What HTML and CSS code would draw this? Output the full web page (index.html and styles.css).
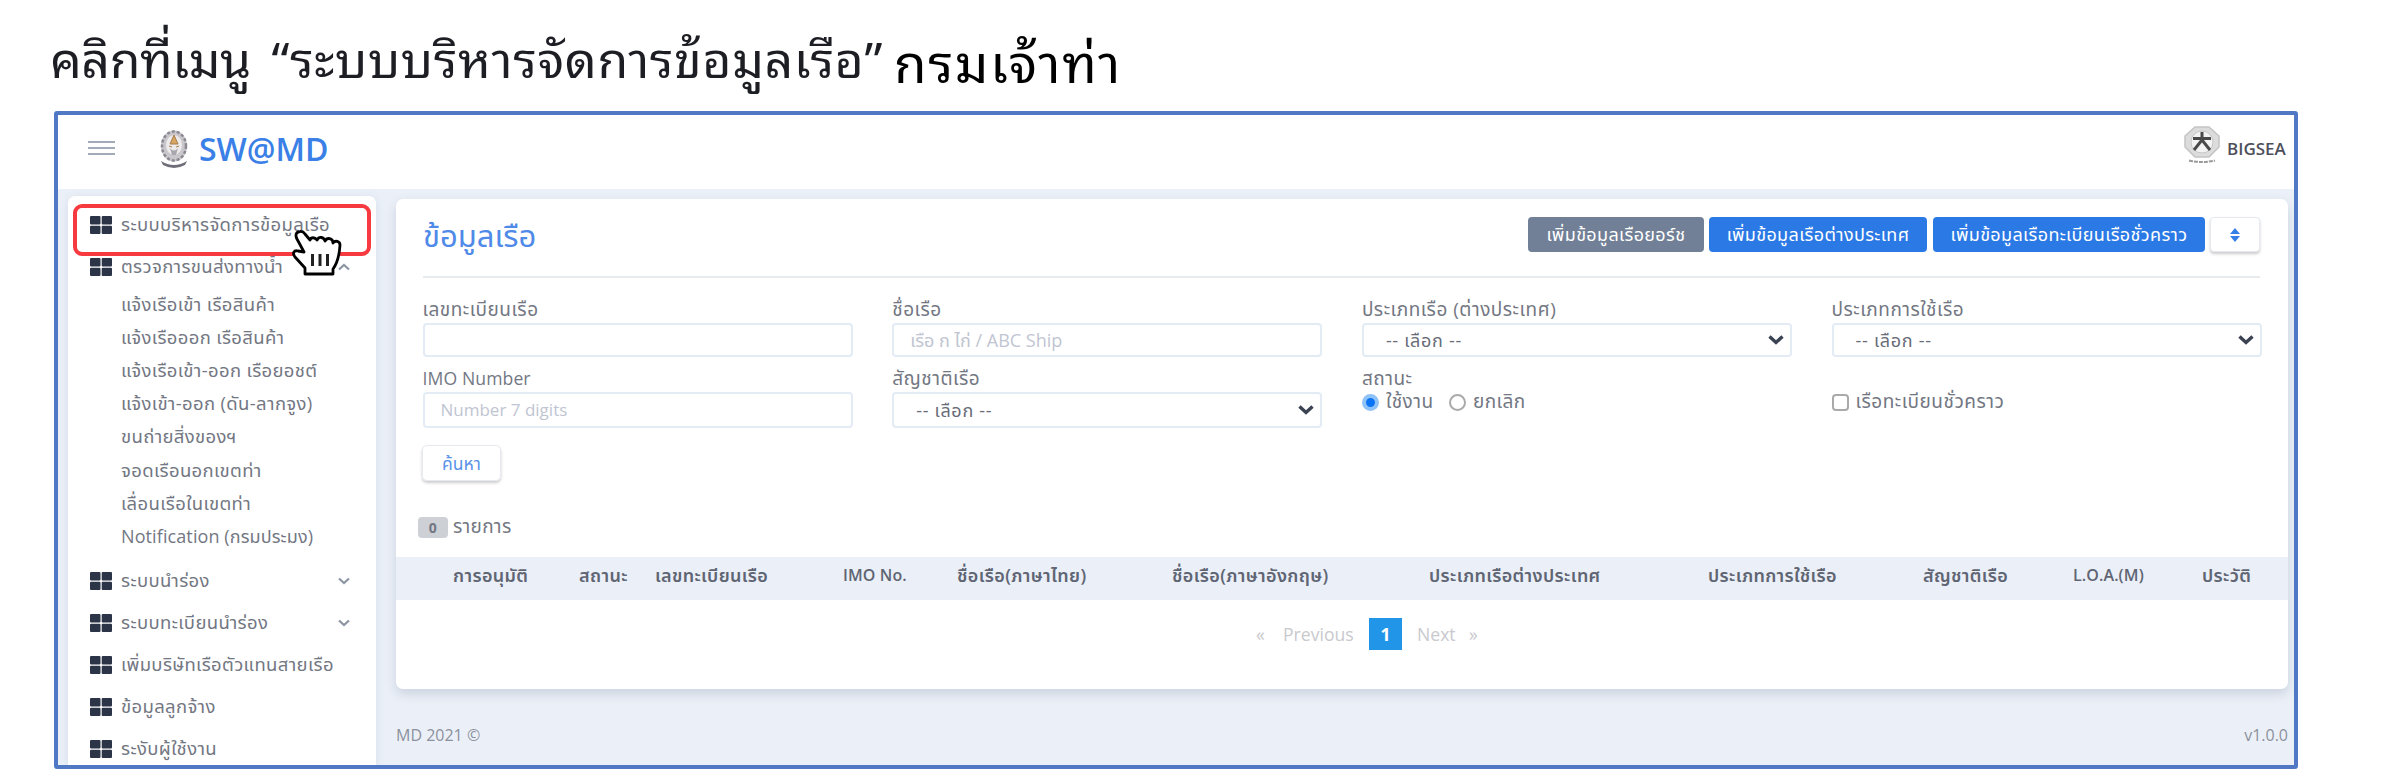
FILE: index.html
```html
<!DOCTYPE html>
<html lang="th">
<head>
<meta charset="utf-8">
<title>SW@MD</title>
<link rel="stylesheet" href="styles.css">
</head>
<body>
<svg class="defs" width="0" height="0">
  <symbol id="grid" viewBox="0 0 22 18"><rect x="0" y="0" width="10.500" height="8.500" rx="1"/><rect x="11.700" y="0" width="10.300" height="8.500" rx="1"/><rect x="0" y="9.700" width="10.500" height="8.300" rx="1"/><rect x="11.700" y="9.700" width="10.300" height="8.300" rx="1"/></symbol>
  <symbol id="down" viewBox="0 0 12 8"><path d="M1 1.500 6 6 11 1.500" fill="none" stroke="currentColor" stroke-width="2.200"/></symbol>
  <symbol id="caret" viewBox="0 0 16 10"><path d="M1.500 1.500 8 7.500 14.500 1.500" fill="none" stroke="currentColor" stroke-width="3.400"/></symbol>
</svg>
<h1 class="caption"><span class="caption-main"><span class="lead">คลิกที่เมนู </span><span class="open">“</span>ระบบบริหารจัดการข้อมูลเรือ”</span><span class="caption-dept">กรมเจ้าท่า</span></h1>
<div class="frame">
  <header class="topbar">
    <div class="burger"><i></i><i></i><i></i></div>
    <svg class="emblem" viewBox="0 0 28 38">
      <ellipse cx="14" cy="16" rx="13" ry="15.500" fill="#c9c7cb"/>
      <ellipse cx="14" cy="16" rx="12" ry="14.500" fill="none" stroke="#8b8891" stroke-width="2.500" stroke-dasharray="3 2"/>
      <ellipse cx="14" cy="15" rx="8" ry="10" fill="#eceaea"/>
      <path d="M14 5 10 14h8zM9 16l3 1M19 16l-3 1" fill="#d8a661" stroke="#a97d4c"/>
      <path d="M10 18q4 5 8 0l-2 7h-4z" fill="#aaa6ad"/>
      <path d="M1 31q13 8 26 0l-2 4q-11 6-22 0z" fill="#6f6d78"/>
    </svg>
    <span class="brand">SW@MD</span>
    <svg class="avatar" viewBox="0 0 36 38">
      <path d="M11 1h14l10 9v11L25 31H11L1 21V10z" fill="#dcdcdc" stroke="#c4c4c4" stroke-width="1.500"/>
      <circle cx="18" cy="16" r="11" fill="#f3f3f3" stroke="#c6c6c6"/>
      <path d="M9 12.500h18M18 6v8L10 24M18 14l8 10" fill="none" stroke="#4a4a4a" stroke-width="3"/>
      <path d="M5 34.500q13 3 26 0" fill="none" stroke="#9b9b9b" stroke-width="2" stroke-dasharray="4 1"/>
    </svg>
    <span class="user">BIGSEA</span>
  </header>
  <div class="body">
    <nav class="sidebar">
      <div class="item"><svg class="ico"><use href="#grid"/></svg><span>ระบบบริหารจัดการข้อมูลเรือ</span></div>
      <div class="item"><svg class="ico"><use href="#grid"/></svg><span>ตรวจการขนส่งทางน้ำ</span><svg class="chev up"><use href="#down"/></svg></div>
      <div class="subs">
        <div class="sub">แจ้งเรือเข้า เรือสินค้า</div>
        <div class="sub">แจ้งเรือออก เรือสินค้า</div>
        <div class="sub">แจ้งเรือเข้า-ออก เรือยอชต์</div>
        <div class="sub">แจ้งเข้า-ออก (ดัน-ลากจูง)</div>
        <div class="sub">ขนถ่ายสิ่งของฯ</div>
        <div class="sub">จอดเรือนอกเขตท่า</div>
        <div class="sub">เลื่อนเรือในเขตท่า</div>
        <div class="sub notif">Notification (กรมประมง)</div>
      </div>
      <div class="item"><svg class="ico"><use href="#grid"/></svg><span>ระบบนำร่อง</span><svg class="chev"><use href="#down"/></svg></div>
      <div class="item"><svg class="ico"><use href="#grid"/></svg><span>ระบบทะเบียนนำร่อง</span><svg class="chev"><use href="#down"/></svg></div>
      <div class="item"><svg class="ico"><use href="#grid"/></svg><span>เพิ่มบริษัทเรือตัวแทนสายเรือ</span></div>
      <div class="item"><svg class="ico"><use href="#grid"/></svg><span>ข้อมูลลูกจ้าง</span></div>
      <div class="item"><svg class="ico"><use href="#grid"/></svg><span>ระงับผู้ใช้งาน</span></div>
      <div class="highlight"></div>
      <svg class="hand" viewBox="0 0 50 46">
        <path d="M8 1.500C4 2 3 5 5 9l7 13-6-1c-4-1-6 2-3 6l10 11v6h28v-5q6-8 7-24c0-4-5-5-7-2 0-5-6-6-8-2-1-4-6-5-8-1-2-3-6-3-7 0L13 4Q11 1 8 1.500z" fill="#fff" stroke="#000" stroke-width="2.800" stroke-linejoin="round"/>
        <path d="M20.500 24v12M28 24v12M35.500 24v12" stroke="#222" stroke-width="3"/>
      </svg>
    </nav>
    <main class="main">
      <section class="card">
        <div class="card-head">
          <h2 class="title">ข้อมูลเรือ</h2>
          <span class="btn b1">เพิ่มข้อมูลเรือยอร์ช</span>
          <span class="btn b2">เพิ่มข้อมูลเรือต่างประเทศ</span>
          <span class="btn b3">เพิ่มข้อมูลเรือทะเบียนเรือชั่วคราว</span>
          <span class="btn b4"><svg width="10" height="14" viewBox="0 0 10 14"><path d="M0 6 5 0l5 6zM0 8h10l-5 6z" fill="#3580e6"/></svg></span>
        </div>
        <div class="form">
          <div class="field"><label>เลขทะเบียนเรือ</label><div class="input"></div></div>
          <div class="field"><label>ชื่อเรือ</label><div class="input ph">เรือ ก ไก่ / ABC Ship</div></div>
          <div class="field"><label>ประเภทเรือ (ต่างประเทศ)</label><div class="input select">-- เลือก --<svg><use href="#caret"/></svg></div></div>
          <div class="field"><label>ประเภทการใช้เรือ</label><div class="input select">-- เลือก --<svg><use href="#caret"/></svg></div></div>
          <div class="field"><label class="latin">IMO Number</label><div class="input tall ph num">Number 7 digits</div></div>
          <div class="field"><label>สัญชาติเรือ</label><div class="input tall select">-- เลือก --<svg><use href="#caret"/></svg></div></div>
          <div class="field"><label>สถานะ</label><div class="choices"><i class="radio on"></i><span class="c1">ใช้งาน</span><i class="radio"></i><span>ยกเลิก</span></div></div>
          <div class="field"><label></label><div class="choices"><i class="check"></i><span>เรือทะเบียนชั่วคราว</span></div></div>
        </div>
        <span class="search">ค้นหา</span>
        <div class="count"><span class="badge">0</span><span>รายการ</span></div>
        <div class="thead">
          <span>การอนุมัติ</span><span>สถานะ</span><span>เลขทะเบียนเรือ</span><span class="en">IMO No.</span><span>ชื่อเรือ(ภาษาไทย)</span><span>ชื่อเรือ(ภาษาอังกฤษ)</span><span>ประเภทเรือต่างประเทศ</span><span>ประเภทการใช้เรือ</span><span>สัญชาติเรือ</span><span class="en">L.O.A.(M)</span><span>ประวัติ</span>
        </div>
        <div class="pager"><span class="p0">«</span><span class="p1">Previous</span><b>1</b><span class="p2">Next</span><span>»</span></div>
      </section>
      <footer class="footer"><span>MD 2021 ©</span><span>v1.0.0</span></footer>
    </main>
  </div>
</div>
</body>
</html>
```
FILE: styles.css
```css
* { box-sizing: border-box; }
body { margin: 0; width: 2404px; height: 778px; background: #fff; overflow: hidden; font-family: "Open Sans", "Noto Sans", "Noto Sans Thai", sans-serif; color: #737783; }
.defs { position: absolute; }
.caption { margin: 0; height: 111px; padding: 21px 0 0 50px; display: flex; font-family: "TH Sarabun New", "Noto Sans Thai Looped", Loma, Garuda, Waree, "Open Sans", "Noto Sans", sans-serif; font-weight: 400; line-height: 70px; white-space: nowrap; }
.caption-main { width: 844px; font-size: 50px; letter-spacing: .6px; color: #1d1d24; }
.lead { letter-spacing: -.4px; }
.open { margin-left: 8px; }
.caption-dept { font-size: 53px; letter-spacing: 1.600px; color: #000; padding-top: 4px; }
.frame { margin-left: 54px; width: 2244px; height: 658px; border: 4px solid #5078c4; border-radius: 3px; background: #ebf0f8; overflow: hidden; display: flex; flex-direction: column; }
.topbar { height: 74px; background: #fff; display: flex; align-items: flex-start; flex: none; padding: 0 9px 0 30px; }
.burger { width: 27px; margin: 26px 45px 0 0; display: grid; gap: 4px; }
.burger i { height: 2px; background: #a3abb8; }
.emblem { width: 28px; height: 38px; margin: 15px 11px 0 0; }
.brand { font-size: 32px; font-weight: 600; color: #3a80e6; line-height: 40px; margin-top: 14px; }
.avatar { width: 36px; height: 38px; margin: 11px 7px 0 auto; }
.user { font-size: 17px; font-weight: 600; color: #4d4f5a; line-height: 24px; margin-top: 22px; width: 58px; }
.body { flex: 1; display: flex; padding-left: 10px; min-height: 0; }
.sidebar { position: relative; width: 308px; margin-top: 7px; background: #fff; border-radius: 7px 7px 0 0; box-shadow: 0 2px 10px #d4dce8; padding: 8px 26px 0 22px; font-size: 18.500px; letter-spacing: .35px; white-space: nowrap; }
.item { height: 41.800px; display: flex; align-items: center; }
.ico { width: 22px; height: 18px; fill: #2c3547; margin-right: 9px; }
.chev { width: 12px; height: 8px; margin-left: auto; color: #8d95a3; }
.up { transform: scaleY(-1); }
.subs { padding: 0 0 7.500px 31px; }
.sub { height: 33.200px; line-height: 32.500px; }
.notif { font-size: 18px; letter-spacing: .1px; }
.highlight { position: absolute; left: 5px; top: 8px; width: 298px; height: 52px; border: 4px solid #f63a40; border-radius: 9px; }
.hand { position: absolute; left: 224px; top: 34px; width: 50px; height: 46px; }
.main { flex: 1; padding: 10px 6px 0 20px; }
.card { height: 490px; background: #fff; border-radius: 7px; box-shadow: 0 5px 12px #cbd2de; }
.card-head { height: 79px; margin: 0 28px 0 27px; border-bottom: 2px solid #e8ebee; padding-top: 18px; display: flex; align-items: flex-start; }
.title { margin: -3px auto 0 0; font-size: 31px; font-weight: 400; line-height: 42px; color: #4f8ae8; }
.btn { height: 35px; line-height: 34px; border-radius: 4px; color: #fff; background: #2a79e5; font-size: 18px; letter-spacing: .35px; text-align: center; white-space: nowrap; }
.b1 { width: 176px; background: #718096; margin-right: 5px; }
.b2 { width: 218px; margin-right: 6px; }
.b3 { width: 272px; margin-right: 5px; }
.b4 { width: 50px; background: #fff; border: 1px solid #e6eaef; box-shadow: 0 2px 3px #ccc; }
.form { display: grid; grid-template-columns: repeat(4, 430px); column-gap: 39.700px; margin: 17px 0 0 26.500px; }
.field { height: 69px; }
.field label { display: block; height: 28px; line-height: 28px; font-size: 19px; letter-spacing: .5px; white-space: nowrap; }
.field .latin { font-size: 17.600px; letter-spacing: .1px; }
.input { height: 34px; border: 2px solid #e3ebf4; border-radius: 4px; padding: 0 16px; line-height: 30px; font-size: 18px; display: flex; align-items: center; justify-content: space-between; }
.tall { height: 36px; }
.ph { color: #bfc5d2; }
.num { font-size: 17px; }
.select { padding: 0 6px 0 22px; color: #686c78; letter-spacing: .7px; }
.select svg { width: 16px; height: 10px; color: #3b4252; }
.choices { display: flex; align-items: center; height: 22px; margin-top: -1px; font-size: 19px; letter-spacing: .5px; }
.radio, .check { width: 17px; height: 17px; border: 2px solid #aaa; border-radius: 50%; margin-right: 7px; }
.check { border-radius: 4px; }
.on { border: 4px solid #8fc3f8; background: #0a74f5; }
.c1 { width: 63px; }
.search { display: block; width: 79px; height: 36px; margin: 12px 0 0 26px; border: 1px solid #e6eaef; border-radius: 5px; box-shadow: 0 2px 3px #ccc; line-height: 34px; text-align: center; color: #5b93e8; font-size: 17.500px; }
.count { margin: 34px 0 0 22px; display: flex; align-items: center; height: 24px; font-size: 19px; letter-spacing: .3px; }
.badge { width: 30px; height: 21px; line-height: 21px; background: #cdd1d6; border-radius: 4px; text-align: center; font-size: 14px; font-weight: 700; margin-right: 5px; }
.thead { margin-top: 18px; height: 43px; line-height: 37px; background: #eaeff8; padding-left: 57px; display: grid; grid-template-columns: 126px 76px 188px 114px 215px 257px 279px 215px 150px 129px 1fr; font-size: 18px; letter-spacing: .35px; font-weight: 600; color: #5f6573; white-space: nowrap; }
.thead .en { font-size: 16px; letter-spacing: .1px; }
.pager { display: flex; height: 32px; line-height: 32px; margin: 18px 0 0 860px; font-size: 17.600px; color: #c9c9ce; }
.pager b { width: 33px; background: #2196e8; color: #fff; text-align: center; margin-right: 15px; }
.p0 { width: 27px; } .p1 { width: 86px; } .p2 { width: 52px; }
.footer { display: flex; justify-content: space-between; margin-top: 33px; line-height: 26px; font-size: 16px; color: #8b919d; }
```
